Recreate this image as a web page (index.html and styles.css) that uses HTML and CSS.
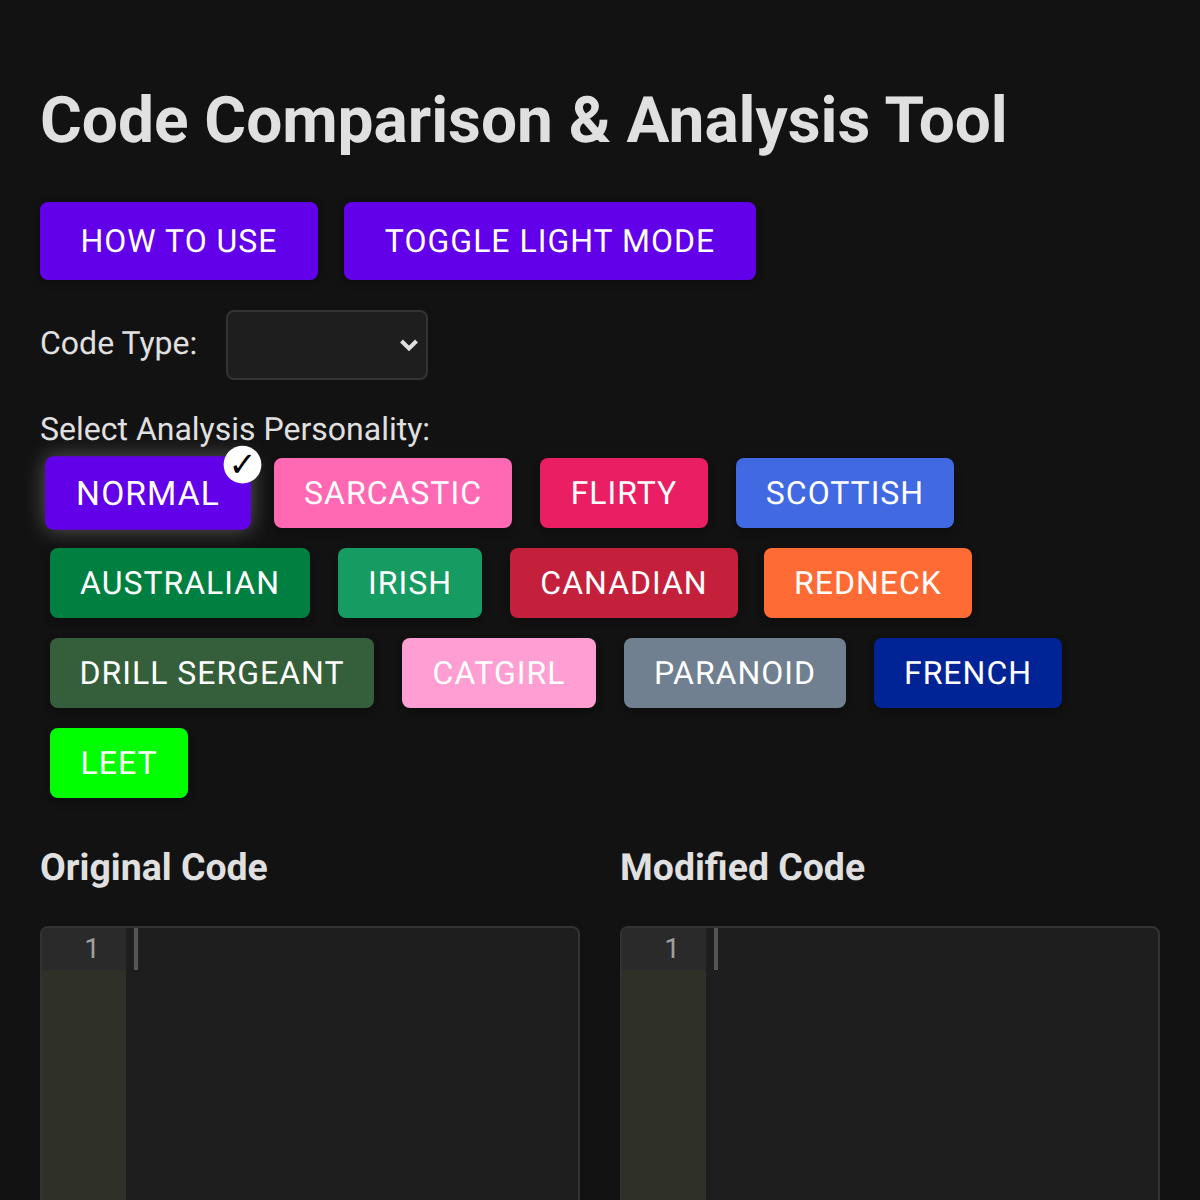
FILE: index.html
```html
<!DOCTYPE html>
<html lang="en">
<head>
<meta charset="utf-8">
<title>Code Comparison &amp; Analysis Tool</title>
<link rel="stylesheet" href="styles.css">
</head>
<body>
<main class="page">
  <h1 class="title">Code Comparison &amp; Analysis Tool</h1>
  <div class="actions">
    <button class="btn how">How to Use</button>
    <button class="btn toggle">Toggle Light Mode</button>
  </div>
  <div class="type-row">
    <label class="label type-label" for="type">Code Type:</label>
    <select class="select" id="type"><option></option></select>
  </div>
  <div class="label personality-label">Select Analysis Personality:</div>
  <div class="personas">
    <button class="persona normal selected">Normal<span class="check">✓</span></button>
    <button class="persona sarcastic">Sarcastic</button>
    <button class="persona flirty">Flirty</button>
    <button class="persona scottish">Scottish</button>
    <button class="persona australian">Australian</button>
    <button class="persona irish">Irish</button>
    <button class="persona canadian">Canadian</button>
    <button class="persona redneck">Redneck</button>
    <button class="persona drill">Drill Sergeant</button>
    <button class="persona catgirl">Catgirl</button>
    <button class="persona paranoid">Paranoid</button>
    <button class="persona french">French</button>
    <button class="persona leet">Leet</button>
  </div>
  <div class="editors">
    <section class="pane">
      <h2 class="pane-title">Original Code</h2>
      <div class="editor">
        <div class="gutter"><div class="line-no">1</div></div>
        <div class="code"><span class="cursor"></span></div>
      </div>
    </section>
    <section class="pane">
      <h2 class="pane-title">Modified Code</h2>
      <div class="editor">
        <div class="gutter"><div class="line-no">1</div></div>
        <div class="code"><span class="cursor"></span></div>
      </div>
    </section>
  </div>
</main>
</body>
</html>
```
FILE: styles.css
```css
* { box-sizing: border-box; }
html, body { margin: 0; height: 1200px; overflow: hidden; background: #121212; }
body { font-family: Roboto, sans-serif; color: #e0e0e0; text-rendering: geometricPrecision; }
.page { padding: 40px; }
.title { margin: 43px 0 44px; font-size: 64px; line-height: 75px; font-weight: 700; letter-spacing: -0.04px; color: #e0e0e0; }
.actions { display: flex; gap: 26px; margin-bottom: 30px; }
.btn {
  height: 78px; padding: 0; border: 0; border-radius: 8px;
  background: #6200ea; color: #fff;
  font: 400 32px Roboto, sans-serif; letter-spacing: 1px; text-transform: uppercase; text-rendering: geometricPrecision;
  box-shadow: 0 2px 8px rgba(0,0,0,.3);
}
.how { width: 278px; }
.toggle { width: 412px; }
.type-row { display: flex; align-items: center; gap: 29px; margin-bottom: 30px; }
.label { font-size: 32px; line-height: 38px; color: #e0e0e0; }
.type-label { padding-bottom: 4px; }
.select {
  appearance: none; width: 202px; height: 70px; border: 2px solid #333; border-radius: 8px;
  background-color: #1e1e1e; color: #e0e0e0;
  background-image: url("data:image/svg+xml,%3Csvg xmlns='http://www.w3.org/2000/svg' width='20' height='14' viewBox='0 0 20 14'%3E%3Cpath d='M2.5 3l7.5 7.5 7.5-7.5' fill='none' stroke='%23e0e0e0' stroke-width='4'/%3E%3C/svg%3E");
  background-repeat: no-repeat; background-position: right 7px center;
}
.personality-label { margin-bottom: 10px; }
.personas { display: flex; flex-wrap: wrap; gap: 20px 28px; padding-left: 10px; }
.persona {
  position: relative; height: 70px; padding: 0; border: 0; border-radius: 8px; color: #fff;
  font: 400 32px Roboto, sans-serif; letter-spacing: 1px; text-transform: uppercase; text-rendering: geometricPrecision;
  box-shadow: 0 4px 8px rgba(0,0,0,.3);
}
.selected { transform: scale(1.05); box-shadow: 0 0 20px rgba(255,255,255,.3); }
.check {
  position: absolute; top: -10px; right: -10px; width: 36px; height: 36px; border-radius: 50%;
  background: #fff; color: #000; font: 400 32px/36px "DejaVu Sans", sans-serif; letter-spacing: 0; text-align: center;
}
.normal { width: 196px; background: #6200ea; }
.sarcastic { width: 238px; background: #ff69b4; }
.flirty { width: 168px; background: #e91e63; }
.scottish { width: 218px; background: #4169e1; }
.australian { width: 260px; background: #008040; }
.irish { width: 144px; background: #169b62; }
.canadian { width: 228px; background: #c4203c; }
.redneck { width: 208px; margin-left: -2px; background: #ff6b35; }
.drill { width: 324px; background: #355e3b; }
.catgirl { width: 194px; background: #ff9ed2; }
.paranoid { width: 222px; background: #708090; }
.french { width: 188px; background: #002395; }
.leet { width: 138px; background: #00ff00; }
.editors { display: grid; grid-template-columns: 540px 540px; gap: 40px; margin-top: 48px; }
.pane-title { margin: 0 0 36px; font-size: 37.44px; line-height: 44px; font-weight: 700; color: #e0e0e0; }
.editor { display: flex; height: 600px; border: 2px solid #333; border-radius: 8px; background: #1e1e1e; overflow: hidden; }
.gutter { width: 84px; background: #2f3129; flex: none; }
.line-no { height: 42px; padding-right: 26px; background: #2a2a2a; color: #a0a0a0; font: 28px/42px Roboto, sans-serif; text-align: right; }
.code { flex: 1; padding-left: 8px; }
.cursor { display: block; width: 4px; height: 42px; background: #555; }
```
